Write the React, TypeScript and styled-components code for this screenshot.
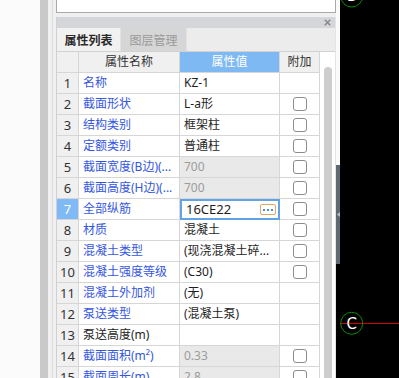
import React from 'react';
import styled, { createGlobalStyle } from 'styled-components';

const Global = createGlobalStyle`
  html, body { margin: 0; padding: 0; background: #fff; }
  body {
    width: 399px; height: 378px; overflow: hidden;
    font-family: "Noto Sans", "Noto Sans CJK SC", sans-serif;
    font-size: 12px;
  }
  * { box-sizing: border-box; }
`;

const Screen = styled.div`
  display: flex;
  width: 399px;
  height: 378px;
  overflow: hidden;
`;

const LeftBlank = styled.div`
  width: 40px;
  flex: none;
  background: #fbfbfb;
`;

const Gutter = styled.div`
  width: 8px;
  flex: none;
  background: #c9c9c9;
`;

const Sidebar = styled.div`
  width: 288px;
  flex: none;
  display: flex;
  background: #f0f0f0;
  padding-left: 4px;
`;

const SideInner = styled.div`
  flex: 1;
  min-width: 0;
  border-left: 1px solid #dcdcdc;
  padding-left: 3px;
  display: flex;
  flex-direction: column;
`;

const TopBox = styled.div`
  flex: none;
  height: 13px;
  background: #fff;
  border: 1px solid #a9a9a9;
  border-top: none;
`;

const Panel = styled.div`
  margin-top: 4px;
  flex: 1;
  min-height: 0;
  display: flex;
  flex-direction: column;
  border-left: 1px solid #d0d0d0;
  border-right: 1px solid #e4e4e4;
  background: #ececec;
`;

const PanelHeader = styled.div`
  flex: none;
  height: 11px;
  background: #d5d6da;
  display: flex;
  justify-content: flex-end;
  align-items: center;
  padding-right: 4px;
`;

const TabBar = styled.div`
  flex: none;
  height: 23px;
  display: flex;
  background: #ececec;
`;

const Tab = styled.div<{ $active?: boolean; $w: number }>`
  width: ${p => p.$w}px;
  display: flex;
  align-items: center;
  justify-content: center;
  background: ${p => (p.$active ? '#f1f1f1' : '#d6d6d6')};
  color: ${p => (p.$active ? '#2a2a2a' : '#9a9a9a')};
  font-weight: ${p => (p.$active ? 700 : 400)};
  border-right: 1px solid #e2e2e2;
`;

const TableArea = styled.div`
  flex: 1;
  min-height: 0;
  display: flex;
  border-top: 1px solid #d2d2d2;
  background: #fff;
`;

const Grid = styled.div`
  width: 263px;
  flex: none;
  display: grid;
  grid-template-columns: 22px 101px 100px 40px;
  grid-auto-rows: 21px;
  align-content: start;
`;

const Cell = styled.div`
  border-right: 1px solid #d6d6d6;
  border-bottom: 1px solid #d6d6d6;
  display: flex;
  align-items: center;
  white-space: nowrap;
  overflow: hidden;
  line-height: 1;
`;

const HeadCell = styled(Cell)<{ $blue?: boolean }>`
  justify-content: center;
  background: ${p => (p.$blue ? '#7fb9f4' : '#f0f0f0')};
  color: ${p => (p.$blue ? '#ffffff' : '#333')};
`;

const NumCell = styled(Cell)<{ $sel?: boolean }>`
  justify-content: center;
  background: ${p => (p.$sel ? '#80baf6' : '#f0f0f0')};
  color: ${p => (p.$sel ? '#ffffff' : '#333')};
  font-size: 13px;
`;

const NameCell = styled(Cell)<{ $plain?: boolean }>`
  padding-left: 4px;
  color: ${p => (p.$plain ? '#1e1e1e' : '#3556e0')};
`;

const ValueCell = styled(Cell)<{ $disabled?: boolean }>`
  padding-left: 4px;
  background: ${p => (p.$disabled ? '#e9e9e9' : '#fff')};
  color: ${p => (p.$disabled ? '#9c9c9c' : '#1e1e1e')};
`;

const EditCell = styled(Cell)`
  border: 2px solid #62a3e8;
  justify-content: space-between;
  padding: 0 2px 0 4px;
  color: #1e1e1e;
  font-size: 13px;
`;

const DotButton = styled.div`
  width: 16px;
  height: 11px;
  border: 1px solid #e2a566;
  border-radius: 2px;
  background: #fff;
  display: flex;
  align-items: center;
  justify-content: center;
  gap: 2px;
`;

const Dot = styled.span`
  width: 2px;
  height: 2px;
  background: #4f8ed8;
`;

const ExtraCell = styled(Cell)`
  justify-content: center;
  background: #fff;
`;

const Check = styled.div`
  width: 14px;
  height: 14px;
  border: 1px solid #8c8c8c;
  border-radius: 3px;
  background: #fff;
`;

const ScrollTrack = styled.div`
  width: 15px;
  flex: none;
  background: #fff;
  padding: 15px 3px 0 4px;
  display: flex;
`;

const Thumb = styled.div`
  flex: 1;
  background: #cdcdcd;
  border-radius: 4px 4px 0 0;
`;

const Strip = styled.div`
  width: 4px;
  flex: none;
  display: flex;
  flex-direction: column;
  background: #000;
`;

const StripTop = styled.div`
  height: 165px;
  background: #fafafa;
`;

const StripHandle = styled.div`
  height: 99px;
  background: #5f6971;
  display: flex;
  align-items: center;
  justify-content: center;
`;

const Canvas = styled.div`
  flex: 1;
  background: #000;
`;

type Row = {
  n: number;
  name: string;
  value: string;
  cb: boolean;
  disabled?: boolean;
  editing?: boolean;
  plain?: boolean;
};

const rows: Row[] = [
  { n: 1, name: '名称', value: 'KZ-1', cb: false },
  { n: 2, name: '截面形状', value: 'L-a形', cb: true },
  { n: 3, name: '结构类别', value: '框架柱', cb: true },
  { n: 4, name: '定额类别', value: '普通柱', cb: true },
  { n: 5, name: '截面宽度(B边)(...', value: '700', cb: true, disabled: true },
  { n: 6, name: '截面高度(H边)(...', value: '700', cb: true, disabled: true },
  { n: 7, name: '全部纵筋', value: '16CE22', cb: true, editing: true },
  { n: 8, name: '材质', value: '混凝土', cb: true },
  { n: 9, name: '混凝土类型', value: '(现浇混凝土碎...', cb: true },
  { n: 10, name: '混凝土强度等级', value: '(C30)', cb: true },
  { n: 11, name: '混凝土外加剂', value: '(无)', cb: false },
  { n: 12, name: '泵送类型', value: '(混凝土泵)', cb: false },
  { n: 13, name: '泵送高度(m)', value: '', cb: false, plain: true },
  { n: 14, name: '截面面积(m²)', value: '0.33', cb: true, disabled: true },
  { n: 15, name: '截面周长(m)', value: '2.8', cb: true, disabled: true },
];

const CloseIcon = () => (
  <svg width="7" height="7" viewBox="0 0 7 7">
    <path d="M0.8 0.8 L6.2 6.2 M6.2 0.8 L0.8 6.2" stroke="#8a8a8a" strokeWidth="1.6" />
  </svg>
);

const Arrow = () => (
  <svg width="3" height="5" viewBox="0 0 3 5">
    <path d="M3 0 L0 2.5 L3 5 Z" fill="#b8bec3" />
  </svg>
);

const AxisCanvas = () => (
  <svg width="59" height="378" viewBox="0 0 59 378">
    <line x1="0" y1="323.5" x2="59" y2="323.5" stroke="#d00000" strokeWidth="1" />
    <circle cx="11.7" cy="-4" r="11" fill="none" stroke="#0a8a0a" strokeWidth="1" />
    <text x="11.7" y="1" fill="#fff" fontSize="14" textAnchor="middle" fontFamily="DejaVu Sans, sans-serif">B</text>
    <circle cx="11.7" cy="323.3" r="11" fill="none" stroke="#0a8a0a" strokeWidth="1" />
    <text x="11.7" y="328.5" fill="#fff" fontSize="15" textAnchor="middle" fontFamily="DejaVu Sans, sans-serif">C</text>
  </svg>
);

export default function App() {
  return (
    <>
      <Global />
      <Screen>
        <LeftBlank />
        <Gutter />
        <Sidebar>
          <SideInner>
            <TopBox />
            <Panel>
              <PanelHeader>
                <CloseIcon />
              </PanelHeader>
              <TabBar>
                <Tab $active $w={64}>属性列表</Tab>
                <Tab $w={66}>图层管理</Tab>
              </TabBar>
              <TableArea>
                <Grid>
                  <HeadCell />
                  <HeadCell>属性名称</HeadCell>
                  <HeadCell $blue>属性值</HeadCell>
                  <HeadCell>附加</HeadCell>
                  {rows.map(r => (
                    <React.Fragment key={r.n}>
                      <NumCell $sel={r.editing}>{r.n}</NumCell>
                      <NameCell $plain={r.plain}>{r.name}</NameCell>
                      {r.editing ? (
                        <EditCell>
                          <span>{r.value}</span>
                          <DotButton>
                            <Dot />
                            <Dot />
                            <Dot />
                          </DotButton>
                        </EditCell>
                      ) : (
                        <ValueCell $disabled={r.disabled}>{r.value}</ValueCell>
                      )}
                      <ExtraCell>{r.cb && <Check />}</ExtraCell>
                    </React.Fragment>
                  ))}
                </Grid>
                <ScrollTrack>
                  <Thumb />
                </ScrollTrack>
              </TableArea>
            </Panel>
          </SideInner>
        </Sidebar>
        <Strip>
          <StripTop />
          <StripHandle>
            <Arrow />
          </StripHandle>
        </Strip>
        <Canvas>
          <AxisCanvas />
        </Canvas>
      </Screen>
    </>
  );
}
